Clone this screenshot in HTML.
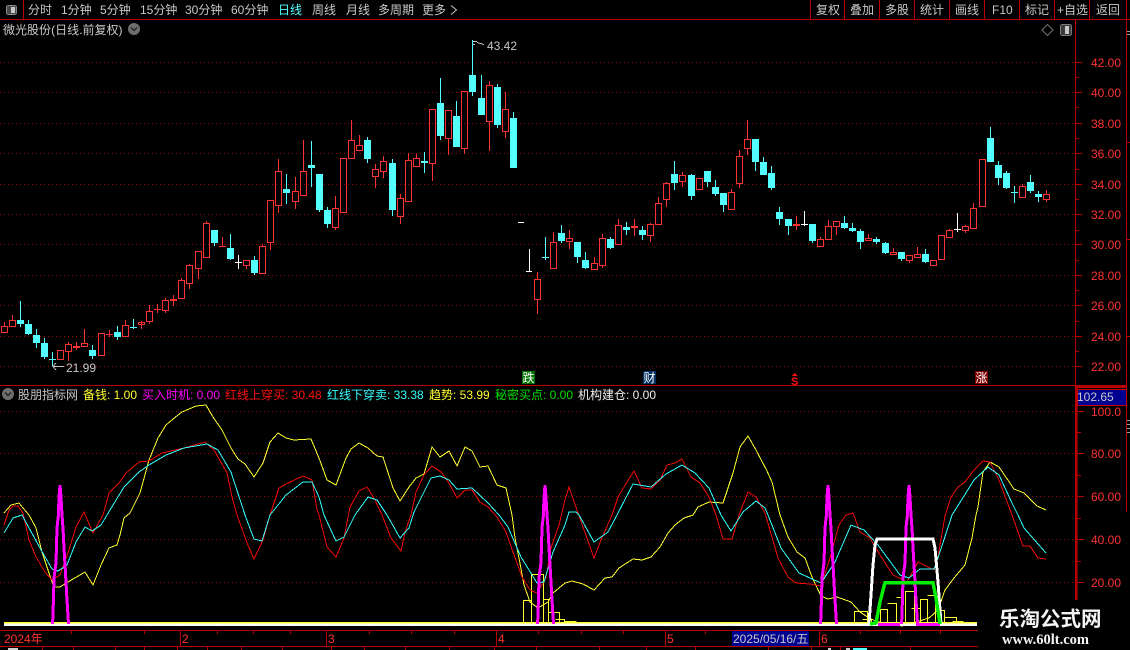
<!DOCTYPE html>
<html><head><meta charset="utf-8"><title>股票K线</title>
<style>
html,body{margin:0;padding:0;background:#000;width:1130px;height:650px;overflow:hidden}
svg{display:block;position:absolute;left:0;top:0}
text{font-family:"Liberation Sans","WenQuanYi Zen Hei","Noto Sans CJK SC",sans-serif;font-size:12px}
.n{fill:#c8c8c8}
.a{fill:#ff3232}
</style></head><body>
<svg width="1130" height="650" viewBox="0 0 1130 650" xmlns="http://www.w3.org/2000/svg">
<g shape-rendering="crispEdges">
<!-- grid -->
<path fill="none" stroke="#960000" stroke-dasharray="1 3" d="M0 62.5H1075M0 92.5H1075M0 123.5H1075M0 153.5H1075M0 184.5H1075M0 214.5H1075M0 244.5H1075M0 275.5H1075M0 305.5H1075M0 336.5H1075M0 366.5H1075M0 411.5H1075M0 453.5H1075M0 496.5H1075M0 539.5H1075M0 582.5H1075"/>
<!-- frame -->
<path fill="none" stroke="#b80000" d="M0 19.5H1130M23.5 0V19M810.5 0V19M844.5 0V19M879.5 0V19M914.5 0V19M949.5 0V19M984.5 0V19M1019.5 0V19M1054.5 0V19M1089.5 0V19M1126.5 0V19M1075.5 20V385M0 385.5H1127M1126.5 20V385M1126.5 386V512M1127 142.5H1130M1127 239.5H1130M1127 336.5H1130"/>
<path fill="none" stroke="#b80000" d="M1075 62.5H1082M1075 92.5H1082M1075 123.5H1082M1075 153.5H1082M1075 184.5H1082M1075 214.5H1082M1075 244.5H1082M1075 275.5H1082M1075 305.5H1082M1075 336.5H1082M1075 366.5H1082M1075 77.5H1079M1075 107.5H1079M1075 138.5H1079M1075 169.5H1079M1075 199.5H1079M1075 230.5H1079M1075 260.5H1079M1075 290.5H1079M1075 321.5H1079M1075 351.5H1079M1077 411.5H1084M1077 453.5H1084M1077 496.5H1084M1077 539.5H1084M1077 582.5H1084M1077 432.5H1081M1077 475.5H1081M1077 518.5H1081M1077 561.5H1081"/>
<rect x="1075" y="386" width="2.5" height="214" fill="#b80000"/>
<rect x="1075" y="386" width="52" height="2" fill="#b80000"/>
<rect x="1077.5" y="389.5" width="49" height="16" fill="#000090" stroke="#c80000"/>
<path fill="none" stroke="#a0a0a0" d="M1127 31.5H1130M1127 34.5H1130M1127 420.5H1130M1127 424.5H1130M1127 428.5H1130M1127 432.5H1130"/>
<!-- candles red -->
<path fill="none" stroke="#ff3232" d="M4.5 322V326M1.5 326.5h6V332.5h-6zM12.5 315V320M9.5 320.5h6V326.5h-6zM57.5 350.5h6V359.5h-6zM68.5 342V344M68.5 352V361M65.5 344.5h6V351.5h-6zM76.5 342V350M73 346.5h7M73 347.5h7M84.5 329V343M81.5 343.5h6V346.5h-6zM98.5 333.5h6V355.5h-6zM109.5 330V337M106 334.5h7M125.5 320V325M122.5 325.5h6V336.5h-6zM141.5 321V329M138.5 322.5h6V324.5h-6zM149.5 305V311M149.5 322V324M146.5 311.5h6V321.5h-6zM157.5 304V313M154 309.5h7M165.5 298V300M165.5 311V313M162.5 300.5h6V310.5h-6zM173.5 295V306M170 299.5h7M170 300.5h7M181.5 278V280M178.5 280.5h6V298.5h-6zM189.5 264V265M189.5 284V289M186.5 265.5h6V283.5h-6zM198.5 269V279M195.5 251.5h6V268.5h-6zM206.5 221V223M203.5 223.5h6V257.5h-6zM222.5 237V247M219 246.5h7M246.5 266V269M243.5 260.5h6V265.5h-6zM262.5 244V246M259.5 246.5h6V273.5h-6zM270.5 243V250M267.5 200.5h6V242.5h-6zM278.5 159V171M278.5 206V213M275.5 171.5h6V205.5h-6zM295.5 177V191M295.5 202V209M292.5 191.5h6V201.5h-6zM303.5 140V171M300.5 171.5h6V195.5h-6zM335.5 196V208M335.5 228V230M332.5 208.5h6V227.5h-6zM340.5 158.5h6V212.5h-6zM351.5 120V140M348.5 140.5h6V158.5h-6zM359.5 135V145M356.5 145.5h6V150.5h-6zM375.5 164V169M375.5 177V188M372.5 169.5h6V176.5h-6zM383.5 156V161M383.5 172V178M380.5 161.5h6V171.5h-6zM400.5 194V198M400.5 217V224M397.5 198.5h6V216.5h-6zM408.5 153V160M405.5 160.5h6V201.5h-6zM416.5 154V158M413.5 158.5h6V166.5h-6zM432.5 164V181M429.5 109.5h6V163.5h-6zM448.5 139V155M445.5 110.5h6V138.5h-6zM464.5 149V154M461.5 91.5h6V148.5h-6zM489.5 81V85M489.5 122V151M486.5 85.5h6V121.5h-6zM505.5 92V109M505.5 132V138M502.5 109.5h6V131.5h-6zM537.5 272V279M537.5 300V314M534.5 279.5h6V299.5h-6zM553.5 232V242M550.5 242.5h6V268.5h-6zM569.5 230V238M569.5 242V249M566.5 238.5h6V241.5h-6zM594.5 257V263M591.5 263.5h6V269.5h-6zM602.5 234V238M602.5 266V268M599.5 238.5h6V265.5h-6zM618.5 219V225M615.5 225.5h6V244.5h-6zM634.5 219V236M631 226.5h7M631 227.5h7M650.5 223V224M650.5 236V242M647.5 224.5h6V235.5h-6zM658.5 197V203M655.5 203.5h6V224.5h-6zM666.5 182V183M666.5 200V207M663.5 183.5h6V199.5h-6zM682.5 172V175M682.5 182V187M679.5 175.5h6V181.5h-6zM696.5 178.5h6V189.5h-6zM731.5 189V192M728.5 192.5h6V209.5h-6zM739.5 150V156M739.5 184V188M736.5 156.5h6V183.5h-6zM747.5 120V139M747.5 149V155M744.5 139.5h6V148.5h-6zM796.5 216V230M793 224.5h7M793 225.5h7M820.5 237V239M817.5 239.5h6V246.5h-6zM828.5 220V226M825.5 226.5h6V239.5h-6zM836.5 227V235M833.5 221.5h6V226.5h-6zM868.5 234V238M865.5 238.5h6V240.5h-6zM893.5 248V252M890.5 252.5h6V254.5h-6zM909.5 261V263M906.5 255.5h6V260.5h-6zM917.5 247V254M914.5 254.5h6V257.5h-6zM930.5 260.5h6V265.5h-6zM938.5 235.5h6V259.5h-6zM949.5 229V230M946.5 230.5h6V237.5h-6zM965.5 225V226M965.5 231V233M962.5 226.5h6V230.5h-6zM973.5 203V208M970.5 208.5h6V228.5h-6zM979.5 159.5h6V206.5h-6zM1022.5 184V186M1019.5 186.5h6V197.5h-6zM1046.5 190V194M1046.5 200V202M1043.5 194.5h6V199.5h-6z"/>
<!-- candles cyan -->
<path fill="#54ffff" d="M17 320h7V324h-7zM20 301h1V327h-1zM25 324h7V334h-7zM28 320h1V335h-1zM33 335h7V343h-7zM36 329h1V348h-1zM41 343h7V357h-7zM44 338h1V359h-1zM49 359h7v1h-7zM52 352h1V366h-1zM89 350h7V356h-7zM92 345h1V359h-1zM114 332h7V337h-7zM117 326h1V340h-1zM130 327h7v1h-7zM133 319h1V329h-1zM211 230h7V243h-7zM214 243h1V246h-1zM227 248h7V259h-7zM230 234h1V260h-1zM251 260h7V273h-7zM254 256h1V275h-1zM283 189h7V193h-7zM286 174h1V204h-1zM308 165h7V168h-7zM311 141h1V187h-1zM316 174h7V210h-7zM319 210h1V212h-1zM324 210h7V224h-7zM327 207h1V228h-1zM364 140h7V159h-7zM367 137h1V163h-1zM389 163h7V210h-7zM392 159h1V216h-1zM421 161h7V163h-7zM424 152h1V173h-1zM437 103h7V136h-7zM440 78h1V140h-1zM453 116h7V147h-7zM456 101h1V147h-1zM469 75h7V92h-7zM472 40h1V96h-1zM478 98h7V115h-7zM481 75h1V115h-1zM494 87h7V125h-7zM497 84h1V128h-1zM510 118h7V168h-7zM513 112h1V118h-1zM542 257h7v1h-7zM545 237h1V260h-1zM558 233h7V241h-7zM561 225h1V243h-1zM574 242h7V257h-7zM577 257h1V263h-1zM582 260h7V268h-7zM585 252h1V269h-1zM607 239h7V248h-7zM610 237h1V249h-1zM623 227h7V230h-7zM626 222h1V235h-1zM639 230h7V235h-7zM642 226h1V240h-1zM671 174h7V183h-7zM674 161h1V190h-1zM688 175h7V196h-7zM691 174h1V200h-1zM704 171h7V182h-7zM707 182h1V187h-1zM712 187h7V194h-7zM715 180h1V196h-1zM720 193h7V205h-7zM723 205h1V212h-1zM752 139h7V162h-7zM755 162h1V171h-1zM760 162h7V175h-7zM763 157h1V162h-1zM768 173h7V188h-7zM771 166h1V190h-1zM776 212h7V219h-7zM779 207h1V225h-1zM785 219h7V226h-7zM788 226h1V235h-1zM809 224h7V241h-7zM812 241h1V243h-1zM841 223h7V228h-7zM844 216h1V229h-1zM849 228h7V231h-7zM852 223h1V232h-1zM857 231h7V242h-7zM860 229h1V249h-1zM873 239h7V242h-7zM876 237h1V244h-1zM882 243h7V253h-7zM885 242h1V254h-1zM898 252h7V259h-7zM901 259h1V261h-1zM922 254h7V262h-7zM925 249h1V263h-1zM987 138h7V162h-7zM990 127h1V138h-1zM995 165h7V178h-7zM998 161h1V185h-1zM1003 173h7V188h-7zM1006 171h1V189h-1zM1011 192h7v1h-7zM1014 186h1V203h-1zM1027 182h7V191h-7zM1030 175h1V193h-1zM1035 194h7V197h-7zM1038 191h1V202h-1z"/>
<!-- white -->
<path fill="#ffffff" d="M235 262h7v1h-7zM238 255h1V269h-1zM518 222h6v1h-6zM526 271h6v1h-6zM529 249h1V271h-1zM801 224h7v1h-7zM804 211h1V226h-1zM954 229h7v1h-7zM957 213h1V232h-1z"/>
<!-- high/low marks -->
<path fill="none" stroke="#c8c8c8" d="M473 41.5H477M473 44.5L475 44.5M477 42.5L484 44.5M53 366.5H64M53 366.5L56 363M53 366.5L56 370"/>
<!-- sub chart: thin yellow bars -->
<path fill="none" stroke="#ffff30" d="M523.5 622V600.5H531.5V622M531.5 600V574.5H543.5V622M543.5 599.5H548.5V622M548.5 612.5H559.5V622M555.5 619.5H564.5V622M564.5 621.5H576.5M854.5 622V611.5H867.5V622M862.5 619.5H871.5V622M880.5 622V609.5H887.5V622M887.5 603.5H896.5V622M896.5 597.5H902.5V622M905.5 622V591.5H914.5V622M911.5 608.5H920.5V622M920.5 622V599.5H927.5V622M927.5 595.5H935.5V622M935.5 610.5H944.5V622M944.5 617.5H956.5V622M952.5 621.5H963.5"/>
<!-- yellow line -->
<polyline fill="none" stroke="#ffff30" points="4,513 11,505 19,503 23,508 29,515 36,528 42,552 52,582 54,587 60,587 68,582 85,572 93,585 101,565 109,548 117,545 120,535 124,518 130,513 140,493 149,460 158,438 166,425 173,419 182,412 196,406 206,405 213,417 222,430 231,448 238,459 245,464 254,477 263,463 270,442 278,433 286,438 294,440 311,439 319,458 327,480 336,485 346,458 351,449 359,443 368,448 377,456 383,457 393,488 400,501 409,487 416,478 424,474 432,447 440,457 449,451 457,466 465,447 472,451 480,467 488,466 497,485 506,488 512,515 515,538 519,558 524,585 530,602 538,608 548,602 553,593 565,583 572,581 583,584 594,590 605,578 612,577 619,568 633,559 642,560 651,557 660,547 668,533 675,525 684,518 693,515 698,507 709,502 723,503 733,473 740,447 748,436 756,450 767,471 772,482 780,515 788,537 797,552 805,558 812,577 821,596 828,599 837,597 851,602 860,612 869,618 878,622 889,623 902,626 916,622 929,618 938,610 945,590 954,578 965,565 972,538 976,515 978,507 983,472 990,462 999,467 1014,489 1024,493 1037,506 1046,510"/>
<!-- red line -->
<polyline fill="none" stroke="#f00808" points="4,525 9,510 13,506 18,506 23,513 29,540 36,557 45,572 52,580 60,575 68,553 76,527 84,512 93,533 103,515 109,493 119,483 126,473 139,462 149,461 162,453 184,448 205,442 214,450 227,473 232,497 237,515 247,543 254,559 263,540 270,515 279,488 286,484 303,476 312,480 317,510 319,515 327,547 336,557 344,538 350,507 359,491 367,487 375,500 382,515 391,538 401,551 405,532 411,515 416,492 424,475 432,466 441,472 449,483 457,498 465,490 472,490 480,502 488,507 497,517 506,532 513,552 522,577 530,590 537,593 546,578 551,548 559,525 565,500 569,487 578,513 594,558 601,540 612,515 618,497 624,487 634,471 642,488 651,489 660,480 667,465 675,463 682,459 691,477 700,483 709,497 716,515 723,539 732,539 739,515 748,492 756,497 765,513 778,558 788,577 796,583 810,584 821,586 830,558 839,525 846,515 853,513 860,532 870,538 880,555 893,575 907,582 918,562 934,570 938,557 945,516 951,497 958,487 965,482 974,470 983,461 990,462 999,480 1012,515 1023,546 1030,546 1038,558 1046,559"/>
<!-- cyan line -->
<polyline fill="none" stroke="#30ffff" points="4,533 13,518 22,515 29,528 40,548 52,569 58,571 67,565 76,542 85,527 92,531 101,525 107,515 124,487 139,472 149,465 166,455 184,448 207,444 218,450 231,472 245,515 254,539 262,541 270,515 286,495 303,482 312,482 319,497 324,515 336,541 344,537 355,515 368,497 377,500 387,515 400,538 409,528 414,512 431,478 440,476 449,480 457,489 472,488 488,503 499,515 508,527 521,557 537,583 544,582 553,552 565,525 569,512 576,512 579,515 594,542 608,532 617,515 633,484 651,487 666,474 682,465 695,473 709,488 721,515 731,531 743,512 756,501 765,508 768,515 781,548 799,573 821,583 835,562 851,525 864,530 878,545 900,575 909,578 920,569 934,569 938,558 952,515 974,480 988,467 999,475 1012,503 1018,515 1024,528 1046,553"/>
<!-- base lines -->
<rect x="4" y="622" width="973" height="1.5" fill="#ffff30"/>
<rect x="4" y="623.5" width="973" height="2.5" fill="#ffffff"/>
<!-- magenta spikes -->
<g fill="none" stroke="#ff00ff" stroke-width="3">
<polyline points="52.6,624 53.5,598 54,578 56,563 57,528 58.4,515 59,497 60,485 61,497 62,515 63,528 64,548 65.6,575 66.7,595 68.5,624"/>
<polyline points="537.6,624 538.5,598 539,578 541,563 542,528 543.4,515 544,497 545,485 546,497 547,515 548,528 549,548 550.6,575 551.7,595 553.5,624"/>
<polyline points="820.6,624 821.5,598 822,578 824,563 825,528 826.4,515 827,497 828,485 829,497 830,515 831,528 832,548 833.6,575 834.7,595 836.5,624"/>
<polyline points="901.6,624 902.5,598 903,578 905,563 906,528 907.4,515 908,497 909,485 910,497 911,515 912,528 913,548 914.6,575 915.7,595 917.5,624"/>
<path d="M878 624.5H900M916 624.5H940"/>
</g>
<!-- white trapezoid -->
<polyline fill="none" stroke="#ffffff" stroke-width="3" points="869,624 871,595 873,565 875,545 877,539 933,539 935,548 938,582 941,624"/>
<!-- green trapezoid -->
<polyline fill="none" stroke="#00f000" stroke-width="3.5" points="870,624 876,623 880,602 885,582.5 933,582.5 936,598 940,624"/>
<!-- date axis -->
<path fill="none" stroke="#b80000" d="M0 630.5H978M0 646.5H978M180.5 631V646M326.5 631V646M496.5 631V646M665.5 631V646M819.5 631V646M71.5 631V634M144.5 631V634M217.5 631V634M253.5 631V634M290.5 631V634M369.5 631V634M411.5 631V634M454.5 631V634M538.5 631V634M581.5 631V634M623.5 631V634M705.5 631V634M782.5 631V634M860.5 631V634M900.5 631V634M940.5 631V634M42.5 647V650M73.5 647V650M115.5 647V650M144.5 647V650M177.5 647V650M207.5 647V650M241.5 647V650M282.5 647V650M331.5 647V650M364.5 647V650M405.5 647V650M449.5 647V650M494.5 647V650M536.5 647V650M599.5 647V650M646.5 647V650M695.5 647V650M768.5 647V650M811.5 647V650M840.5 647V650M910.5 647V650"/>
<rect x="732" y="631" width="77" height="15" fill="#000090"/>
<path fill="#d0d0d0" d="M8 648h10v2H8zM828 648h3v2h-3zM846 648h4v2h-4z"/>
<path fill="#54ffff" d="M853 648h14v2h-14z"/>
<!-- label boxes -->
<rect x="522" y="371" width="13" height="13" fill="#007000"/>
<rect x="643" y="371" width="13" height="13" fill="#003060"/>
<rect x="975" y="371" width="13" height="13" fill="#800000"/>
<!-- top icons -->
<rect x="6.5" y="5.5" width="10" height="9" rx="2" fill="#4a4a4a" stroke="#8a8a8a"/>
<rect x="11" y="7" width="4" height="6" fill="#c8c8c8"/>
<rect x="1060.5" y="24.5" width="11" height="11" rx="2" fill="#3a3a3a" stroke="#7a7a7a"/>
<rect x="1065" y="26" width="4" height="8" fill="#c8c8c8"/>
<path fill="#ff1010" d="M794.5 373l3 3h-6z"/>
</g>
<path d="M1047.5 24.5L1053 30L1047.5 35.5L1042 30Z" fill="none" stroke="#707070"/>
<circle cx="134" cy="29" r="6" fill="#6e6e6e"/>
<path d="M131 27.5L134 30.5L137 27.5" fill="none" stroke="#222" stroke-width="1.4"/>
<circle cx="8" cy="394" r="6" fill="#6e6e6e"/>
<path d="M5 392.5L8 395.5L11 392.5" fill="none" stroke="#222" stroke-width="1.4"/>
<path d="M451 5.5L456.5 10L451 14.5" fill="none" stroke="#c8c8c8"/>
<!-- nav text -->
<text class="n" x="28" y="14">分时</text>
<text class="n" x="61" y="14">1分钟</text>
<text class="n" x="100" y="14">5分钟</text>
<text class="n" x="140" y="14">15分钟</text>
<text class="n" x="185" y="14">30分钟</text>
<text class="n" x="231" y="14">60分钟</text>
<text x="278" y="14" fill="#54ffff">日线</text>
<text class="n" x="312" y="14">周线</text>
<text class="n" x="346" y="14">月线</text>
<text class="n" x="378" y="14">多周期</text>
<text class="n" x="422" y="14">更多</text>
<text class="n" x="816" y="14">复权</text>
<text class="n" x="850" y="14">叠加</text>
<text class="n" x="885" y="14">多股</text>
<text class="n" x="920" y="14">统计</text>
<text class="n" x="955" y="14">画线</text>
<text class="n" x="992" y="14">F10</text>
<text class="n" x="1025" y="14">标记</text>
<text class="n" x="1057" y="14">+自选</text>
<text class="n" x="1096" y="14">返回</text>
<text class="n" x="3" y="34" textLength="119.5">微光股份(日线.前复权)</text>
<text class="n" x="487" y="50">43.42</text>
<text class="n" x="66" y="372">21.99</text>
<!-- price labels -->
<text class="a" x="1091" y="67">42.00</text>
<text class="a" x="1091" y="97">40.00</text>
<text class="a" x="1091" y="128">38.00</text>
<text class="a" x="1091" y="158">36.00</text>
<text class="a" x="1091" y="189">34.00</text>
<text class="a" x="1091" y="219">32.00</text>
<text class="a" x="1091" y="249">30.00</text>
<text class="a" x="1091" y="280">28.00</text>
<text class="a" x="1091" y="310">26.00</text>
<text class="a" x="1091" y="341">24.00</text>
<text class="a" x="1091" y="371">22.00</text>
<text class="n" x="1077" y="401">102.65</text>
<text class="a" x="1091" y="416">100.0</text>
<text class="a" x="1091" y="458">80.00</text>
<text class="a" x="1091" y="501">60.00</text>
<text class="a" x="1091" y="544">40.00</text>
<text class="a" x="1091" y="587">20.00</text>
<!-- legend -->
<text class="n" x="18" y="399">股朋指标网</text>
<text x="83" y="399" fill="#ffff30">备钱: 1.00</text>
<text x="142" y="399" fill="#ff00ff">买入时机: 0.00</text>
<text x="225" y="399" fill="#ff1010">红线上穿买: 30.48</text>
<text x="327" y="399" fill="#30ffff">红线下穿卖: 33.38</text>
<text x="429" y="399" fill="#ffff30">趋势: 53.99</text>
<text x="495" y="399" fill="#00e000">秘密买点: 0.00</text>
<text x="578" y="399" fill="#f0f0f0">机构建仓: 0.00</text>
<!-- markers -->
<text x="522.5" y="382" fill="#fff">跌</text>
<text x="643.5" y="382" fill="#fff">财</text>
<text x="975.5" y="382" fill="#fff">涨</text>
<text x="791" y="385" fill="#ff1010" style="font-size:11px;font-weight:bold">S</text>
<!-- date labels -->
<text class="a" x="4" y="643">2024年</text>
<text class="a" x="182" y="643">2</text>
<text class="a" x="328" y="643">3</text>
<text class="a" x="498" y="643">4</text>
<text class="a" x="667" y="643">5</text>
<text class="a" x="821" y="643">6</text>
<text class="n" x="733" y="643">2025/05/16/五</text>
<!-- watermark -->
<text x="999" y="626" fill="#f4f4f4" style="font-size:20.5px;font-weight:bold;font-family:'Noto Sans CJK SC','WenQuanYi Zen Hei',sans-serif">乐淘公式网</text>
<text x="1002" y="644" fill="#f4f4f4" style="font-size:14.5px;font-weight:bold;font-family:'Liberation Serif',serif">www.60lt.com</text>
</svg>
</body></html>
